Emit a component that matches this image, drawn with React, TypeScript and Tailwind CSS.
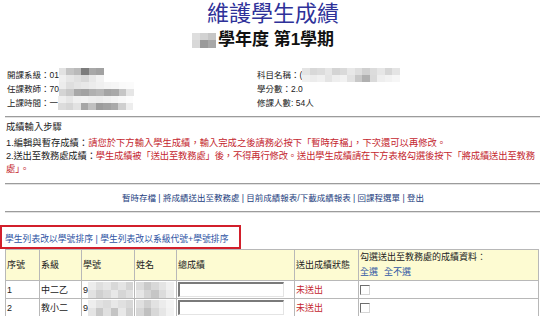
import React from "react";

type Shades = string[][];

function Blur({ rows, cell = "w-[7.5px] h-[7px]" }: { rows: Shades; cell?: string }) {
  return (
    <span className="inline-flex flex-col align-middle">
      {rows.map((r, i) => (
        <span key={i} className="flex">
          {r.map((c, j) => (
            <span key={j} className={`${cell} ${c}`} />
          ))}
        </span>
      ))}
    </span>
  );
}

const subBlur: Shades = [
  ["bg-[#dedede]", "bg-[#d2d2d2]", "bg-[#c6c6c6]"],
  ["bg-[#d8d8d8]", "bg-[#9a9a9a]", "bg-[#a8a8a8]"],
];

const info1: Shades = [
  ["bg-[#e2e2e2]", "bg-[#c4c4c4]", "bg-[#bababa]", "bg-[#7c7c7c]", "bg-[#a8a8a8]", "bg-[#a2a2a2]"],
  ["bg-[#efefef]", "bg-[#e6e6e6]", "bg-[#e0e0e0]", "bg-[#d8d8d8]", "bg-[#e8e8e8]", "bg-[#f2f2f2]"],
];
const info2: Shades = [
  ["bg-[#ececec]", "bg-[#dedede]", "bg-[#e4e4e4]", "bg-[#e8e8e8]", "bg-[#ececec]", "bg-[#f0f0f0]", "bg-[#f4f4f4]", "bg-[#f6f6f6]", "bg-[#fafafa]", "bg-[#fbfbfb]"],
  ["bg-[#d4d4d4]", "bg-[#c8c8c8]", "bg-[#a8a8a8]", "bg-[#a2a2a2]", "bg-[#b0b0b0]", "bg-[#b6b6b6]", "bg-[#a4a4a4]", "bg-[#a9a9a9]", "bg-[#c6c6c6]", "bg-[#e6e6e6]"],
];
const info3: Shades = [
  ["bg-[#eeeeee]", "bg-[#e6e6e6]", "bg-[#f0f0f0]", "bg-[#f2f2f2]", "bg-[#eeeeee]", "bg-[#ececec]", "bg-[#f0f0f0]", "bg-[#f4f4f4]", "bg-[#f8f8f8]", "bg-[#fcfcfc]"],
  ["bg-[#dcdcdc]", "bg-[#d6d6d6]", "bg-[#e2e2e2]", "bg-[#a6a6a6]", "bg-[#c0c0c0]", "bg-[#9c9c9c]", "bg-[#a2a2a2]", "bg-[#aaaaaa]", "bg-[#cfcfcf]", "bg-[#ededed]"],
];
const subject: Shades = [
  ["bg-[#e4e4e4]", "bg-[#d8d8d8]", "bg-[#dcdcdc]", "bg-[#e6e6e6]", "bg-[#d4d4d4]", "bg-[#dadada]", "bg-[#e8e8e8]", "bg-[#dedede]", "bg-[#d0d0d0]", "bg-[#dcdcdc]", "bg-[#e6e6e6]", "bg-[#d6d6d6]", "bg-[#e4e4e4]"],
  ["bg-[#f0f0f0]", "bg-[#ececec]", "bg-[#f0f0f0]", "bg-[#e4e4e4]", "bg-[#eeeeee]", "bg-[#f2f2f2]", "bg-[#e2e2e2]", "bg-[#c8c8c8]", "bg-[#b0b0b0]", "bg-[#dadada]", "bg-[#eeeeee]", "bg-[#f2f2f2]", "bg-[#f6f6f6]"],
];

const idBlur1: Shades = [
  ["bg-[#ececec]", "bg-[#dedede]", "bg-[#e6e6e6]", "bg-[#d8d8d8]", "bg-[#e4e4e4]", "bg-[#d4d4d4]"],
  ["bg-[#e2e2e2]", "bg-[#d0d0d0]", "bg-[#dadada]", "bg-[#e8e8e8]", "bg-[#d6d6d6]", "bg-[#e0e0e0]"],
];
const nameBlur1: Shades = [
  ["bg-[#dcdcdc]", "bg-[#cacaca]", "bg-[#d8d8d8]", "bg-[#e4e4e4]", "bg-[#f0f0f0]"],
  ["bg-[#e6e6e6]", "bg-[#d4d4d4]", "bg-[#c6c6c6]", "bg-[#dcdcdc]", "bg-[#ececec]"],
];
const idBlur2: Shades = [
  ["bg-[#eeeeee]", "bg-[#e2e2e2]", "bg-[#dcdcdc]", "bg-[#e8e8e8]", "bg-[#e0e0e0]", "bg-[#d8d8d8]"],
  ["bg-[#e4e4e4]", "bg-[#c8c8c8]", "bg-[#e0e0e0]", "bg-[#c4c4c4]", "bg-[#e8e8e8]", "bg-[#d0d0d0]"],
];
const nameBlur2: Shades = [
  ["bg-[#e0e0e0]", "bg-[#d0d0d0]", "bg-[#e2e2e2]", "bg-[#ececec]", "bg-[#f4f4f4]"],
  ["bg-[#d6d6d6]", "bg-[#c0c0c0]", "bg-[#d8d8d8]", "bg-[#e6e6e6]", "bg-[#f2f2f2]"],
];

function Rule() {
  return <div className="h-0 border-t border-b border-t-[#9c9c9c] border-b-[#e2e2e2]" />;
}

function Check() {
  return (
    <span className="inline-block w-[10px] h-[10px] bg-white border-t border-l border-t-[#6e6e6e] border-l-[#6e6e6e] border-b border-r border-b-[#d6d6d6] border-r-[#d6d6d6] align-middle" />
  );
}

function ScoreInput() {
  return (
    <div className="w-[106px] h-[15px] bg-white border-t-2 border-l-2 border-t-[#7a7a7a] border-l-[#7a7a7a] border-b border-r border-b-[#e4e4e4] border-r-[#e4e4e4]" />
  );
}

const rows = [
  { no: "1", cls: "中二乙", id: idBlur1, name: nameBlur1 },
  { no: "2", cls: "教小二", id: idBlur2, name: nameBlur2 },
];

export default function App() {
  const cell = "border border-[#b8b8b8] px-[1px]";
  return (
    <div className="w-[546px] h-[316px] overflow-hidden bg-white text-[#222] font-['Liberation_Sans','Noto_Sans_CJK_TC',sans-serif]">
      <h1 className="text-center text-[22px] leading-[28px] text-[#2e3199]">維護學生成績</h1>

      <div className="h-[24px] flex items-center justify-center pr-[20px] text-[17px] leading-[24px] font-bold text-[#111]">
        <Blur rows={subBlur} cell="w-[8px] h-[7.5px]" />
        <span className="ml-[2px]">學年度 第1學期</span>
      </div>

      <div className="mt-[16px] pl-[7px] grid grid-cols-[250px_1fr] text-[8.5px] leading-[14px]">
        <div className="flex items-center h-[14px]">
          開課系級：01
          <Blur rows={info1} />
        </div>
        <div className="flex items-center h-[14px]">
          科目名稱：(
          <Blur rows={subject} />
        </div>
        <div className="flex items-center h-[14px]">
          任課教師：70
          <Blur rows={info2} />
        </div>
        <div className="h-[14px]">學分數：2.0</div>
        <div className="flex items-center h-[14px]">
          上課時間：一
          <Blur rows={info3} />
        </div>
        <div className="h-[14px]">修課人數: 54人</div>
      </div>

      <div className="mt-[6px] ml-[5px] mr-[6px]">
        <Rule />
      </div>

      <div className="mt-[2px] pl-[6px] text-[9.3px]">
        <div className="leading-[14px]">成績輸入步驟</div>
        <div className="mt-[3px] leading-[13px] whitespace-nowrap">
          <div>
            1.編輯與暫存成績：
            <span className="text-[#c4262e]">
              請您於下方輸入學生成績，輸入完成之後請務必按下「暫時存檔」，下次還可以再修改。
            </span>
          </div>
          <div className="tracking-[-0.15px]">
            2.送出至教務處成績：
            <span className="text-[#c4262e]">
              學生成績被「送出至教務處」後，不得再行修改。送出學生成績請在下方表格勾選後按下「將成績送出至教務
            </span>
          </div>
          <div className="text-[#c4262e]">處」。</div>
        </div>
      </div>

      <div className="mt-[7px] ml-[5px] mr-[6px]">
        <Rule />
      </div>

      <div className="mt-[6px] text-center text-[8.5px] leading-[14px] text-[#23407e]">
        暫時存檔 | 將成績送出至教務處 | 目前成績報表/下載成績報表 | 回課程選單 | 登出
      </div>

      <div className="mt-[6px] ml-[5px] mr-[6px]">
        <Rule />
      </div>

      <div className="mt-[12px] w-[241px] border-2 border-[#d21f2b] pt-[6px] pb-[1px] pl-[3px] text-[8.8px] leading-[13px] text-[#2f55a4] whitespace-nowrap">
        學生列表改以學號排序 | 學生列表改以系級代號+學號排序
      </div>

      <table className="ml-[5px] w-[534px] border-collapse border border-[#a8a8a8] text-[9px] leading-[12px] table-fixed">
        <colgroup>
          <col className="w-[34px]" />
          <col className="w-[42px]" />
          <col className="w-[53px]" />
          <col className="w-[42px]" />
          <col className="w-[118px]" />
          <col className="w-[64px]" />
          <col />
        </colgroup>
        <thead>
          <tr className="bg-[#fdfbd2] h-[27px] text-left font-normal">
            <th className={`${cell} font-normal align-middle`}>序號</th>
            <th className={`${cell} font-normal align-middle`}>系級</th>
            <th className={`${cell} font-normal align-middle`}>學號</th>
            <th className={`${cell} font-normal align-middle`}>姓名</th>
            <th className={`${cell} font-normal align-middle`}>總成績</th>
            <th className={`${cell} font-normal align-middle whitespace-nowrap`}>送出成績狀態</th>
            <th className={`${cell} font-normal align-top leading-[15px]`}>
              <div>勾選送出至教務處的成績資料：</div>
              <div className="text-[#2f55a4]">
                全選<span className="ml-[6px]">全不選</span>
              </div>
            </th>
          </tr>
        </thead>
        <tbody>
          {rows.map((r) => (
            <tr key={r.no} className="h-[18px]">
              <td className={cell}>{r.no}</td>
              <td className={cell}>{r.cls}</td>
              <td className={`${cell} whitespace-nowrap`}>
                <span className="align-middle">9</span>
                <Blur rows={r.id} cell="w-[7.5px] h-[8px]" />
              </td>
              <td className={cell}>
                <Blur rows={r.name} cell="w-[7.5px] h-[8px]" />
              </td>
              <td className={cell}>
                <ScoreInput />
              </td>
              <td className={`${cell} text-[#c4262e]`}>未送出</td>
              <td className={cell}>
                <Check />
              </td>
            </tr>
          ))}
          <tr className="h-[18px]">
            <td className={cell} />
            <td className={cell} />
            <td className={cell} />
            <td className={cell} />
            <td className={cell}>
              <ScoreInput />
            </td>
            <td className={cell} />
            <td className={cell} />
          </tr>
        </tbody>
      </table>
    </div>
  );
}
